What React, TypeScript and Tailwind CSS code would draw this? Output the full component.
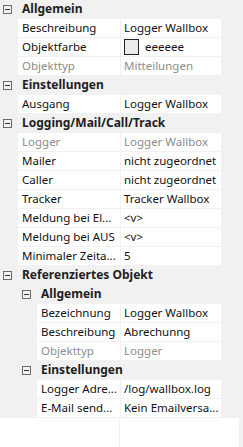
type RowProps = {
  label: string;
  value?: string;
  depth?: number;
  disabled?: boolean;
  swatch?: boolean;
};

function MinusBox() {
  return (
    <svg width="9" height="9" viewBox="0 0 9 9" className="shrink-0">
      <rect x="0.5" y="0.5" width="8" height="8" fill="none" stroke="#6d6d6d" />
      <line x1="2" y1="4.5" x2="7" y2="4.5" stroke="#333" />
    </svg>
  );
}

function Header({ title, depth = 0 }: { title: string; depth?: number }) {
  return (
    <div className="flex h-[18px] items-center whitespace-nowrap">
      <div className={depth ? 'ml-[22px]' : 'ml-[3px]'}>
        <MinusBox />
      </div>
      <span className="ml-[10px] text-[12px] font-bold text-[#1e1e1e]">{title}</span>
    </div>
  );
}

function Row({ label, value, depth = 0, disabled, swatch }: RowProps) {
  const tone = disabled ? 'text-[#8d8d8d]' : 'text-[#111]';
  return (
    <div className="flex h-[18px] whitespace-nowrap text-[11.5px]">
      <div className={depth ? 'w-[37px] shrink-0' : 'w-[18px] shrink-0'} />
      <div className={`flex flex-1 items-center bg-white pl-[4px] ${tone}`}>{label}</div>
      <div className="w-px shrink-0" />
      <div className={`flex w-[100px] shrink-0 items-center gap-[6px] bg-white pl-[3px] ${tone}`}>
        {swatch && <span className="h-[16px] w-[15px] border border-[#222] bg-[#ececec]" />}
        {value}
      </div>
      <div className="w-[22px] shrink-0" />
    </div>
  );
}

export default function App() {
  return (
    <div
      className="flex h-[447px] w-[243px] flex-col bg-[#f1f1f1]"
      style={{ fontFamily: '"Noto Sans", "Open Sans", sans-serif' }}
    >
      <div className="flex flex-col gap-px">
        <Header title="Allgemein" />
        <Row label="Beschreibung" value="Logger Wallbox" />
        <Row label="Objektfarbe" value="eeeeee" swatch />
        <Row label="Objekttyp" value="Mitteilungen" disabled />
        <Header title="Einstellungen" />
        <Row label="Ausgang" value="Logger Wallbox" />
        <Header title="Logging/Mail/Call/Track" />
        <Row label="Logger" value="Logger Wallbox" disabled />
        <Row label="Mailer" value="nicht zugeordnet" />
        <Row label="Caller" value="nicht zugeordnet" />
        <Row label="Tracker" value="Tracker Wallbox" />
        <Row label="Meldung bei El..." value="<v>" />
        <Row label="Meldung bei AUS" value="<v>" />
        <Row label="Minimaler Zeita..." value="5" />
        <Header title="Referenziertes Objekt" />
        <Header title="Allgemein" depth={1} />
        <Row label="Bezeichnung" value="Logger Wallbox" depth={1} />
        <Row label="Beschreibung" value="Abrechunng" depth={1} />
        <Row label="Objekttyp" value="Logger" depth={1} disabled />
        <Header title="Einstellungen" depth={1} />
        <Row label="Logger Adre..." value="/log/wallbox.log" depth={1} />
        <Row label="E-Mail send..." value="Kein Emailversa..." depth={1} />
      </div>
      <div className="mt-px flex flex-1">
        <div className="w-[119px] bg-white" />
        <div className="w-px bg-[#f1f1f1]" />
        <div className="w-[119px] bg-white" />
      </div>
    </div>
  );
}
